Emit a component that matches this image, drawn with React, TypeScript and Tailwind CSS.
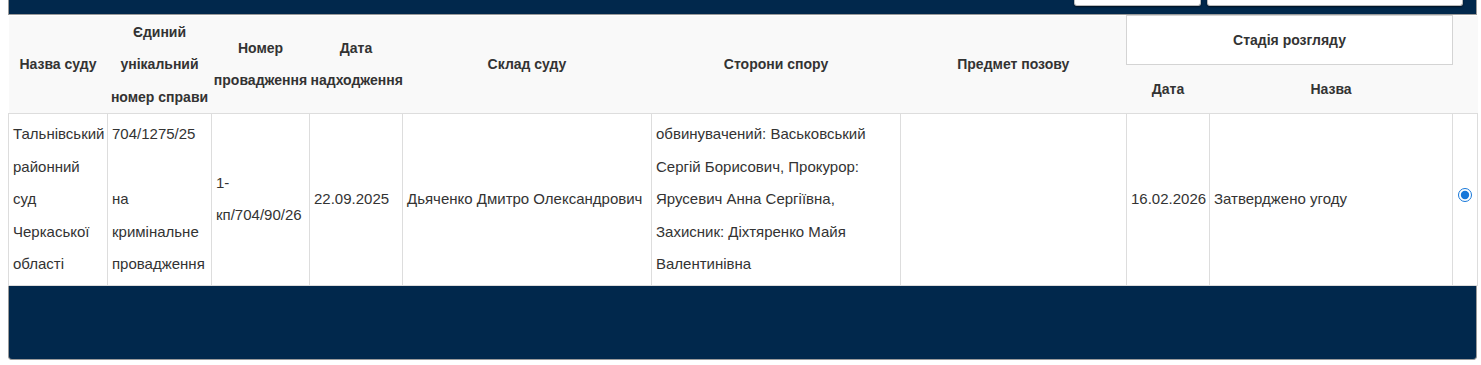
import React from "react";

const navy = "bg-[#01284c]";

export default function App() {
  const th = "font-bold text-[#333] text-center align-middle px-[1px] leading-[32.5px] text-[14px]";
  const td = "border border-[#ddd] px-[4px] py-[4px] align-middle leading-[32.5px] text-[#333] text-[15px]";
  return (
    <div className="bg-white w-[1481px] h-[365px] font-['Liberation_Sans',Arial,sans-serif] text-[14px]">
      <div className="ml-2 w-[1469px]">
        <div className={`${navy} h-[15px] border-l border-r border-b border-[#9a9a9a] flex justify-end items-start gap-[6px] pr-[13px]`}>
          <div className="w-[127px] h-[6px] bg-white rounded-b-[3px] shadow-[0_1px_2px_rgba(0,0,0,0.6)] border border-t-0 border-[#bbb]" />
          <div className="w-[256px] h-[6px] bg-white rounded-b-[3px] shadow-[0_1px_2px_rgba(0,0,0,0.6)] border border-t-0 border-[#bbb]" />
        </div>
        <table className="table-fixed border-collapse w-[1469px]">
          <colgroup>
            <col className="w-[99px]" />
            <col className="w-[104px]" />
            <col className="w-[98px]" />
            <col className="w-[93px]" />
            <col className="w-[249px]" />
            <col className="w-[249px]" />
            <col className="w-[226px]" />
            <col className="w-[83px]" />
            <col className="w-[243px]" />
            <col className="w-[25px]" />
          </colgroup>
          <thead className="bg-[#f9f9f9]">
            <tr className="h-[49px]">
              <th rowSpan={2} className={th}>Назва суду</th>
              <th rowSpan={2} className={th}>Єдиний унікальний номер справи</th>
              <th rowSpan={2} className={th}>Номер провадження</th>
              <th rowSpan={2} className={th}>Дата надходження</th>
              <th rowSpan={2} className={th}>Склад суду</th>
              <th rowSpan={2} className={th}>Сторони спору</th>
              <th rowSpan={2} className={th}>Предмет позову</th>
              <th colSpan={2} className="font-bold text-[#333] text-center align-middle bg-white border border-[#d4d4d4] leading-[20px]">
                Стадія розгляду
              </th>
              <th rowSpan={2} className={th}></th>
            </tr>
            <tr className="h-[49px]">
              <th className={th}>Дата</th>
              <th className={th}>Назва</th>
            </tr>
          </thead>
          <tbody>
            <tr>
              <td className={td}>Тальнівський районний суд Черкаської області</td>
              <td className={td}>
                704/1275/25
                <br />
                <br />
                на кримінальне провадження
              </td>
              <td className={td}>1-кп/704/90/26</td>
              <td className={td}>22.09.2025</td>
              <td className={td}>Дьяченко Дмитро Олександрович</td>
              <td className={td}>
                обвинувачений: Васьковський Сергій Борисович, Прокурор: Ярусевич Анна Сергіївна, Захисник: Діхтяренко Майя Валентинівна
              </td>
              <td className={td}></td>
              <td className={td}>16.02.2026</td>
              <td className={td}>Затверджено угоду</td>
              <td className={`${td} px-0`}>
                <input
                  type="radio"
                  checked
                  readOnly
                  className="block mx-auto -mt-[9px] w-[14px] h-[14px] accent-[#1677d9]"
                />
              </td>
            </tr>
          </tbody>
        </table>
        <div className={`${navy} h-[74px] border-l border-r border-b border-[#9a9a9a] rounded-b-[4px]`} />
      </div>
    </div>
  );
}
